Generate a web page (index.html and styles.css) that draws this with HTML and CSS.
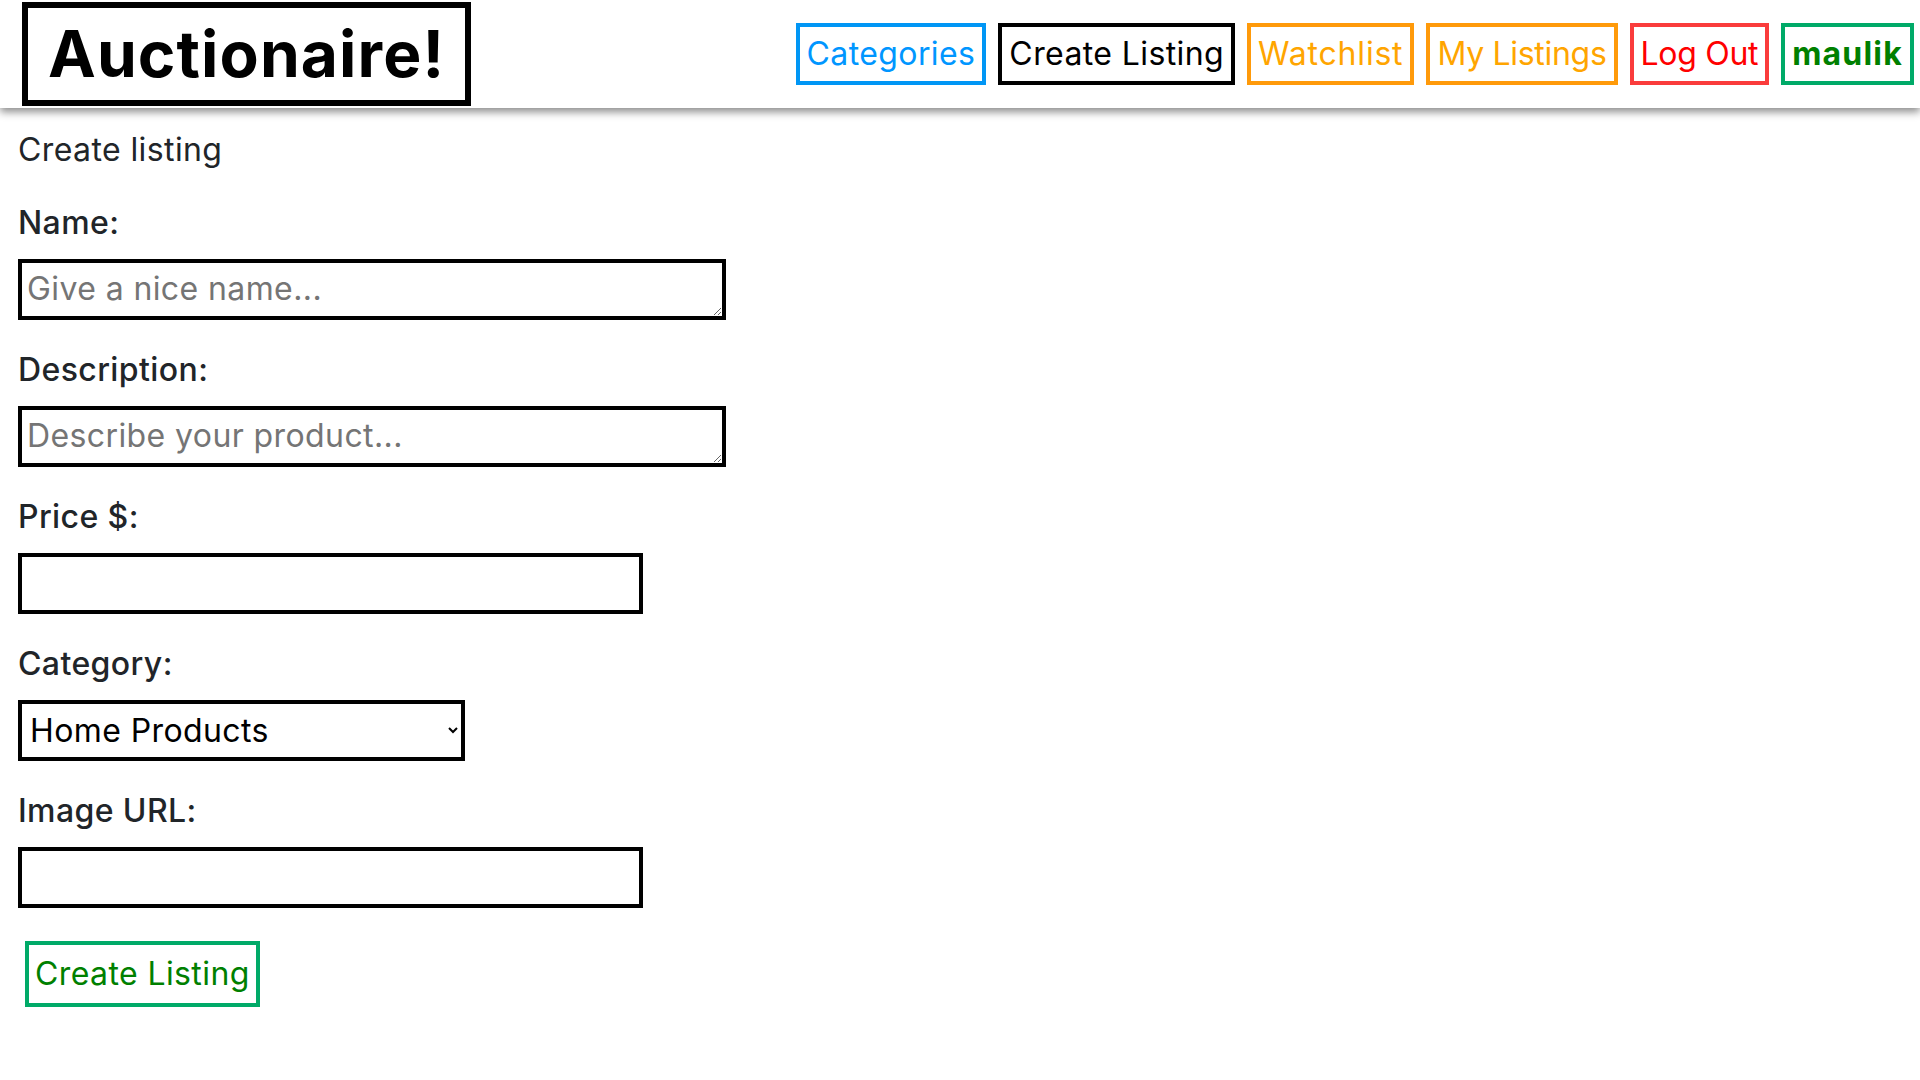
FILE: index.html
```html
<!DOCTYPE html>
<html lang="en">
<head>
<meta charset="utf-8">
<title>Auctionaire! - Create listing</title>
<link rel="stylesheet" href="styles.css">
</head>
<body>
<header class="topbar">
  <div class="brand">Auctionaire!</div>
  <nav class="nav">
    <a class="nav-link nav-blue" href="#">Categories</a>
    <a class="nav-link nav-black" href="#">Create Listing</a>
    <a class="nav-link nav-orange nav-wide" href="#">Watchlist</a>
    <a class="nav-link nav-orange nav-tight" href="#">My Listings</a>
    <a class="nav-link nav-red nav-tight" href="#">Log Out</a>
    <a class="nav-link nav-green" href="#">maulik</a>
  </nav>
</header>
<main class="content">
  <h2 class="page-title">Create listing</h2>
  <form class="listing-form">
    <div class="field">
      <label class="field-label" for="name">Name:</label>
      <textarea class="field-input w-area" id="name" rows="1" placeholder="Give a nice name..."></textarea>
    </div>
    <div class="field">
      <label class="field-label" for="desc">Description:</label>
      <textarea class="field-input w-area" id="desc" rows="1" placeholder="Describe your product..."></textarea>
    </div>
    <div class="field">
      <label class="field-label" for="price">Price $:</label>
      <input class="field-input w-input" id="price" type="number">
    </div>
    <div class="field">
      <label class="field-label" for="cat">Category:</label>
      <select class="field-input w-select" id="cat">
        <option>Home Products</option>
        <option>Electronics</option>
        <option>Fashion</option>
        <option>Toys</option>
      </select>
    </div>
    <div class="field">
      <label class="field-label" for="img">Image URL:</label>
      <input class="field-input w-input" id="img" type="text">
    </div>
    <button class="submit-btn" type="submit">Create Listing</button>
  </form>
</main>
</body>
</html>
```

FILE: styles.css
```css
body {
  margin: 0;
  font-family: Inter, "Open Sans", sans-serif;
  color: #212529;
  background: #fff;
}

.topbar {
  display: flex;
  align-items: center;
  justify-content: space-between;
  height: 108px;
  padding: 0 6px 0 22px;
  box-shadow: 0 4px 8px rgba(0, 0, 0, 0.45);
}

.brand {
  border: 6px solid #000;
  padding: 0 20px;
  font-size: 64px;
  font-weight: 700;
  line-height: 92px;
  color: #000;
  letter-spacing: 1.1px;
}

.nav {
  display: flex;
  gap: 12px;
}

.nav-link {
  border: 4px solid;
  padding: 3px 7px;
  font-size: 32px;
  line-height: 48px;
  text-decoration: none;
  letter-spacing: 0.4px;
}

.nav-blue { color: #0096ff; border-color: #0096f5; }
.nav-black { color: #000; border-color: #000; }
.nav-orange { color: #ffa500; border-color: #ff9a0a; }
.nav-red { color: #ff0000; border-color: #fa3c3c; }
.nav-green { color: #008000; border-color: #00aa68; font-weight: 700; letter-spacing: 1.2px; }
.nav-wide { letter-spacing: 0.8px; }
.nav-tight { letter-spacing: -0.3px; }

.content {
  padding: 18px 0 0 18px;
}

.page-title {
  margin: 0 0 25px;
  font-size: 32px;
  font-weight: 400;
  line-height: 48px;
  letter-spacing: 0.4px;
}

.field {
  margin-bottom: 26px;
}

.field-label {
  display: block;
  font-size: 32px;
  font-weight: 500;
  line-height: 48px;
  margin-bottom: 12px;
  letter-spacing: 0.4px;
}

.field-input {
  display: block;
  box-sizing: border-box;
  height: 61px;
  margin: 0;
  border: 4px solid #000;
  border-radius: 0;
  padding: 2px 5px;
  font-family: inherit;
  font-size: 32px;
  line-height: 48px;
  color: #000;
  background: #fff;
  letter-spacing: 0.4px;
}

.field-input::placeholder {
  color: #757575;
}

.w-area { width: 708px; }
.w-input { width: 625px; }
.w-select { width: 447px; padding: 0 4px; }

.submit-btn {
  display: block;
  margin: 33px 0 0 7px;
  border: 4px solid #00aa68;
  background: #fff;
  padding: 5px 6px;
  font-family: inherit;
  font-size: 32px;
  line-height: 48px;
  color: #008000;
  letter-spacing: 0.4px;
}
```
